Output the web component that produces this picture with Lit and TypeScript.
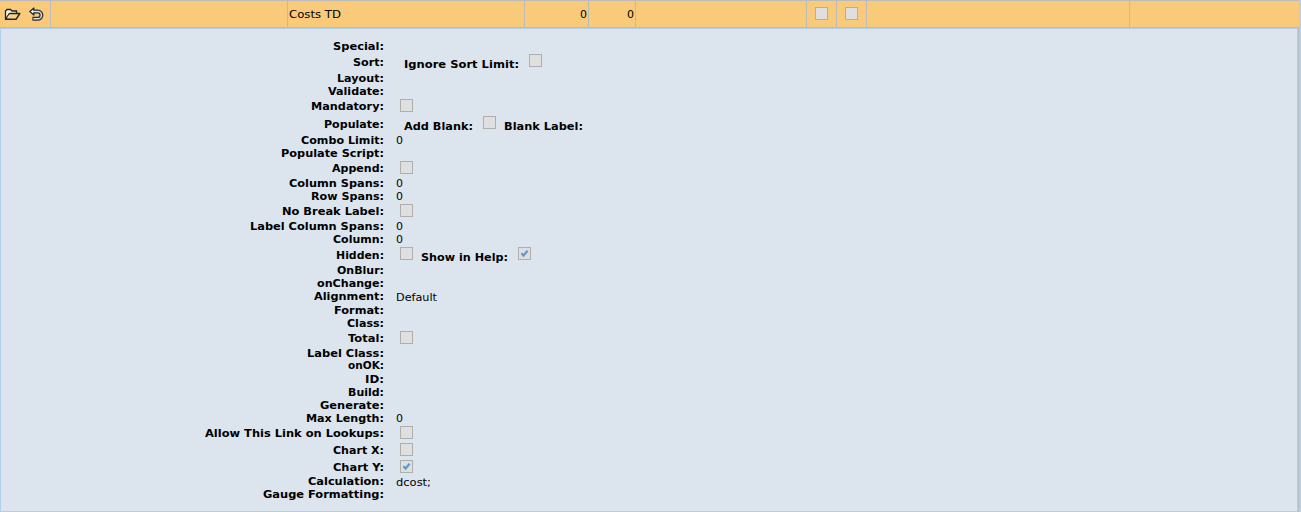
import { LitElement, html, css, svg, nothing } from "lit";
import { customElement } from "lit/decorators.js";

type Part = { text?: string; check?: boolean; x: number; w?: number; drop?: number };
type Row = { label: string; w: number; h: number; parts?: Part[] };

const r = (label: string, w: number, h: number, ...parts: Part[]): Row => ({ label, w, h, parts });
const zero: Part = { text: "0", x: 11 };
const box = (checked = false): Part => ({ check: checked, x: 15, drop: 1 });

const ROWS: Row[] = [
  r("Special:", 51, 16),
  r("Sort:", 31, 16, { text: "Ignore Sort Limit:", x: 19, w: 115, drop: 2 }, { check: false, x: 10 }),
  r("Layout:", 47, 13),
  r("Validate:", 56, 15),
  r("Mandatory:", 73, 18, box()),
  r("Populate:", 60, 16, { text: "Add Blank:", x: 19, w: 69, drop: 2 }, { check: false, x: 10 }, { text: "Blank Label:", x: 8, w: 79, drop: 2 }),
  r("Combo Limit:", 83, 13, zero),
  r("Populate Script:", 103, 15),
  r("Append:", 52, 15, box()),
  r("Column Spans:", 95, 13, zero),
  r("Row Spans:", 73, 15, zero),
  r("No Break Label:", 102, 15, box()),
  r("Label Column Spans:", 134, 13, zero),
  r("Column:", 51, 16, zero),
  r("Hidden:", 48, 15, { check: false, x: 15 }, { text: "Show in Help:", x: 8, w: 87, drop: 2 }, { check: true, x: 10 }),
  r("OnBlur:", 47, 13),
  r("onChange:", 67, 13),
  r("Alignment:", 70, 14, { text: "Default", x: 11, w: 41, drop: 1 }),
  r("Format:", 50, 13),
  r("Class:", 37, 15),
  r("Total:", 36, 15, box()),
  r("Label Class:", 77, 12),
  r("onOK:", 36, 14),
  r("ID:", 19, 13),
  r("Build:", 36, 13),
  r("Generate:", 64, 13),
  r("Max Length:", 78, 15, zero),
  r("Allow This Link on Lookups:", 179, 17, box()),
  r("Chart X:", 51, 17, box()),
  r("Chart Y:", 51, 14, box(true)),
  r("Calculation:", 76, 13, { text: "dcost;", x: 11, w: 35, drop: 1 }),
  r("Gauge Formatting:", 121, 13),
];

@customElement("check-box")
class CheckBox extends LitElement {
  static properties = { checked: { type: Boolean } };
  declare checked: boolean;
  static styles = css`
    :host { display: block; box-sizing: border-box; width: 13px; height: 13px; border: 1px solid #afafaf; background: #dfdfdf; flex: none; }
    svg { display: block; }
  `;
  render() {
    return this.checked
      ? html`<svg width="11" height="11" viewBox="0 0 11 11"><path d="M2.4 5.2 L4.5 7.5 L8.6 2.7" fill="none" stroke="#5f97d2" stroke-width="2.2"/></svg>`
      : nothing;
  }
}

/** Text stretched horizontally so that it fills the given advance width. */
@customElement("fit-text")
class FitText extends LitElement {
  static properties = { width: { type: Number } };
  declare width: number;
  static styles = css`
    :host { display: block; white-space: nowrap; flex: none; line-height: 13px; }
    span { display: block; width: max-content; transform-origin: 0 0; }
  `;
  render() { return html`<span><slot></slot></span>`; }
  firstUpdated() {
    if (!this.width) return;
    const span = this.renderRoot.querySelector("span")!;
    const natural = span.getBoundingClientRect().width;
    this.style.width = `${this.width}px`;
    span.style.transform = `scaleX(${this.width / natural})`;
  }
}

const folder = svg`
  <path d="M1.5 11V3L3 1.5h3.5L8 3h4.5v2.5" fill="#fff6dc" stroke="#222" stroke-width="1.3"/>
  <path d="M1.5 11.3L5.5 5.5H15.8L12 11.3Z" fill="#fbd27d" stroke="#222" stroke-width="1.4" stroke-linejoin="round"/>
  <path d="M3.5 9.5L6 6.5" fill="none" stroke="#fff6dc" stroke-width="1"/>`;
const undo = svg`
  <path d="M4 3.6h4.8a3.6 3.6 0 0 1 0 7.2H3.4" fill="none" stroke="#2b2b33" stroke-width="4"/>
  <path d="M4.9 0.1v7L0.8 3.6Z" fill="#fff" stroke="#2b2b33" stroke-width="1.3" stroke-linejoin="round"/>
  <path d="M3.5 3.6h5.3a3.6 3.6 0 0 1 0 7.2H4.4" fill="none" stroke="#dcdce6" stroke-width="1.5"/>`;

@customElement("app-root")
class AppRoot extends LitElement {
  static styles = css`
    :host { display: block; box-sizing: border-box; width: 1301px; height: 512px; overflow: hidden; background: #b3cfe9; font: 11px "DejaVu Sans", sans-serif; color: #000; }
    .bar { box-sizing: border-box; display: grid; grid-template-columns: 51px 237px 237px 64px 47px 171px 30px 30px 263px 169px; width: 1299px; height: 28px; border-top: 1px solid #bbb; border-bottom: 1px solid #bbb; background: #f9ca7a; }
    .cell { box-sizing: border-box; display: flex; align-items: center; border-right: 1px solid #bbb; line-height: 13px; }
    .cell:last-child { border-right: 0; }
    .icons { padding-left: 4px; gap: 8px; }
    .icons svg { flex: none; overflow: visible; }
    .name { padding-left: 1px; }
    .num { justify-content: flex-end; padding-right: 1px; }
    .mid { justify-content: center; padding-bottom: 1px; }
    .frame { box-sizing: border-box; width: 1299px; height: 484px; border-right: 1px solid #bbb; }
    .panel { box-sizing: border-box; height: 484px; border: 1px solid #b3cfe9; background: #dce4ee; padding-top: 9px; }
    .row { display: flex; align-items: flex-start; }
    .label { box-sizing: border-box; width: 384px; padding: 2px 1px 0 0; display: flex; justify-content: flex-end; font-weight: bold; }
    .strong { font-weight: bold; }
    .value { display: flex; align-items: flex-start; }
  `;
  part_(p: Part) {
    if (p.text === undefined) return html`<check-box ?checked=${p.check} style="margin:${p.drop ?? 0}px 0 0 ${p.x}px"></check-box>`;
    return html`<fit-text class=${p.text.length > 7 ? "strong" : "plain"} .width=${p.w ?? 0} style="margin:${2 + (p.drop ?? 0)}px 0 0 ${p.x}px">${p.text}</fit-text>`;
  }
  render() {
    return html`
      <div class="bar">
        <div class="cell icons">
          <svg width="17" height="13" viewBox="0 0 17 13">${folder}</svg>
          <svg width="15" height="13" viewBox="0 0 15 13">${undo}</svg>
        </div>
        <div class="cell"></div>
        <div class="cell name"><fit-text .width=${52}>Costs TD</fit-text></div>
        <div class="cell num">0</div>
        <div class="cell num">0</div>
        <div class="cell"></div>
        <div class="cell mid"><check-box></check-box></div>
        <div class="cell mid"><check-box></check-box></div>
        <div class="cell"></div>
        <div class="cell"></div>
      </div>
      <div class="frame"><div class="panel">
        ${ROWS.map((row) => html`
          <div class="row" style="height:${row.h}px">
            <div class="label"><fit-text .width=${row.w}>${row.label}</fit-text></div>
            <div class="value">${row.parts?.map((p) => this.part_(p))}</div>
          </div>`)}
      </div></div>`;
  }
}
